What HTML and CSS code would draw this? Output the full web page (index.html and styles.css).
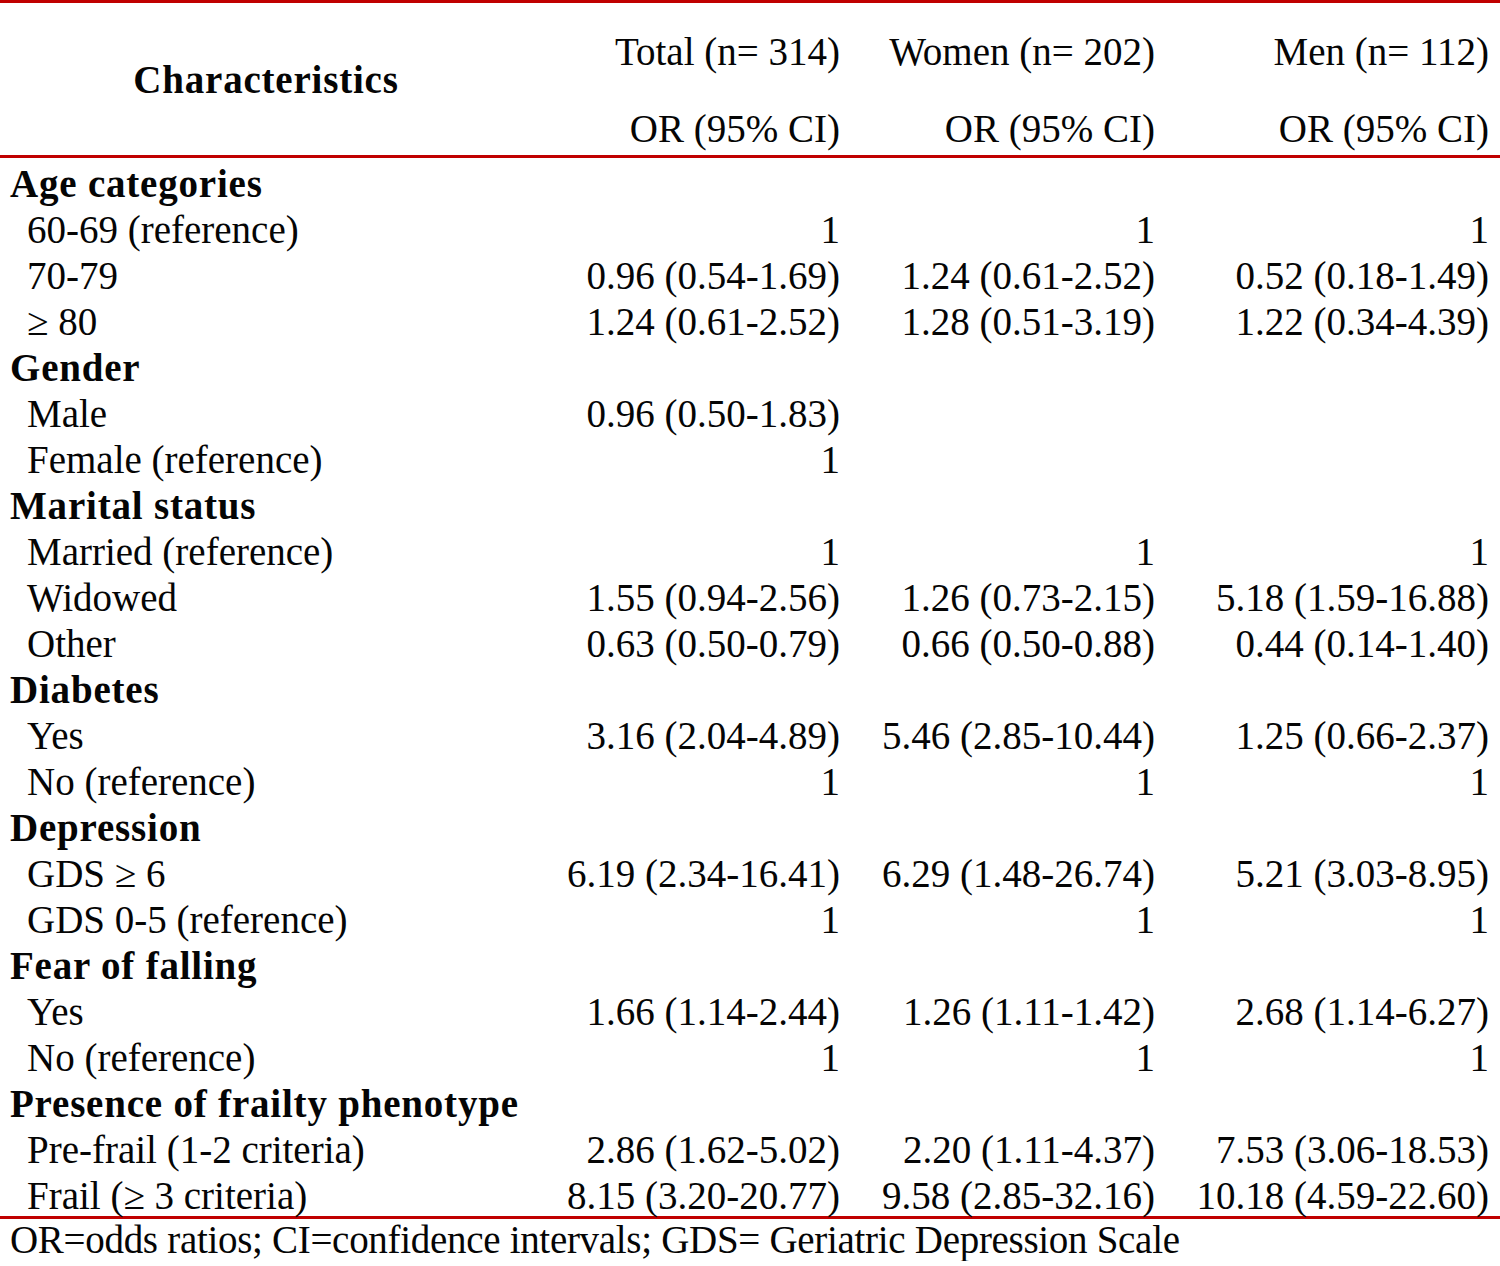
FILE: index.html
```html
<!DOCTYPE html>
<html lang="en">
<head>
<meta charset="utf-8">
<title>Odds ratios table</title>
<link rel="stylesheet" href="styles.css">
</head>
<body>
<div class="sheet">
  <div class="head">
    <div class="h-char">Characteristics</div>
    <div class="h-n h-c2">Total (n= 314)</div>
    <div class="h-n h-c3">Women (n= 202)</div>
    <div class="h-n h-c4">Men (n= 112)</div>
    <div class="h-or h-c2">OR (95% CI)</div>
    <div class="h-or h-c3">OR (95% CI)</div>
    <div class="h-or h-c4">OR (95% CI)</div>
  </div>
  <div class="body">
    <div class="row group"><div class="lab">Age categories</div><div></div><div></div><div></div></div>
    <div class="row"><div class="lab sub">60-69 (reference)</div><div class="num">1</div><div class="num">1</div><div class="num">1</div></div>
    <div class="row"><div class="lab sub">70-79</div><div class="num">0.96 (0.54-1.69)</div><div class="num">1.24 (0.61-2.52)</div><div class="num">0.52 (0.18-1.49)</div></div>
    <div class="row"><div class="lab sub">≥ 80</div><div class="num">1.24 (0.61-2.52)</div><div class="num">1.28 (0.51-3.19)</div><div class="num">1.22 (0.34-4.39)</div></div>
    <div class="row group"><div class="lab">Gender</div><div></div><div></div><div></div></div>
    <div class="row"><div class="lab sub">Male</div><div class="num">0.96 (0.50-1.83)</div><div></div><div></div></div>
    <div class="row"><div class="lab sub">Female (reference)</div><div class="num">1</div><div></div><div></div></div>
    <div class="row group"><div class="lab">Marital status</div><div></div><div></div><div></div></div>
    <div class="row"><div class="lab sub">Married (reference)</div><div class="num">1</div><div class="num">1</div><div class="num">1</div></div>
    <div class="row"><div class="lab sub">Widowed</div><div class="num">1.55 (0.94-2.56)</div><div class="num">1.26 (0.73-2.15)</div><div class="num">5.18 (1.59-16.88)</div></div>
    <div class="row"><div class="lab sub">Other</div><div class="num">0.63 (0.50-0.79)</div><div class="num">0.66 (0.50-0.88)</div><div class="num">0.44 (0.14-1.40)</div></div>
    <div class="row group"><div class="lab">Diabetes</div><div></div><div></div><div></div></div>
    <div class="row"><div class="lab sub">Yes</div><div class="num">3.16 (2.04-4.89)</div><div class="num">5.46 (2.85-10.44)</div><div class="num">1.25 (0.66-2.37)</div></div>
    <div class="row"><div class="lab sub">No (reference)</div><div class="num">1</div><div class="num">1</div><div class="num">1</div></div>
    <div class="row group"><div class="lab">Depression</div><div></div><div></div><div></div></div>
    <div class="row"><div class="lab sub">GDS ≥ 6</div><div class="num">6.19 (2.34-16.41)</div><div class="num">6.29 (1.48-26.74)</div><div class="num">5.21 (3.03-8.95)</div></div>
    <div class="row"><div class="lab sub">GDS 0-5 (reference)</div><div class="num">1</div><div class="num">1</div><div class="num">1</div></div>
    <div class="row group"><div class="lab">Fear of falling</div><div></div><div></div><div></div></div>
    <div class="row"><div class="lab sub">Yes</div><div class="num">1.66 (1.14-2.44)</div><div class="num">1.26 (1.11-1.42)</div><div class="num">2.68 (1.14-6.27)</div></div>
    <div class="row"><div class="lab sub">No (reference)</div><div class="num">1</div><div class="num">1</div><div class="num">1</div></div>
    <div class="row group"><div class="lab">Presence of frailty phenotype</div><div></div><div></div><div></div></div>
    <div class="row"><div class="lab sub">Pre-frail (1-2 criteria)</div><div class="num">2.86 (1.62-5.02)</div><div class="num">2.20 (1.11-4.37)</div><div class="num">7.53 (3.06-18.53)</div></div>
    <div class="row"><div class="lab sub">Frail (≥ 3 criteria)</div><div class="num">8.15 (3.20-20.77)</div><div class="num">9.58 (2.85-32.16)</div><div class="num">10.18 (4.59-22.60)</div></div>
  </div>
  <div class="foot">OR=odds ratios; CI=confidence intervals; GDS= Geriatric Depression Scale</div>
</div>
</body>
</html>
```

FILE: styles.css
```css
html, body {
  margin: 0;
  padding: 0;
  background: #ffffff;
}

.sheet {
  width: 1500px;
  font-family: "Liberation Serif", "Times New Roman", serif;
  font-size: 39px;
  line-height: 46px;
  color: #050505;
}

.head {
  border-top: 3px solid #c00000;
  border-bottom: 3px solid #c00000;
  display: grid;
  grid-template-columns: 512px 318px 315px 334px;
  grid-template-rows: 46px 46px;
  row-gap: 31px;
  padding: 26px 11px 3px 10px;
}

.h-char {
  grid-column: 1;
  grid-row: 1 / span 2;
  align-self: start;
  margin-top: 28px;
  text-align: center;
  font-weight: bold;
  letter-spacing: 0.8px;
}

.h-n { grid-row: 1; text-align: right; }
.h-or { grid-row: 2; text-align: right; }
.h-c2 { grid-column: 2; }
.h-c3 { grid-column: 3; }
.h-c4 { grid-column: 4; }

.body {
  padding: 0 11px 0 10px;
}

.row {
  display: grid;
  grid-template-columns: 512px 318px 315px 334px;
  box-sizing: border-box;
  height: 46px;
  padding-top: 5px;
  line-height: 41px;
  white-space: nowrap;
}

.group .lab {
  font-weight: bold;
  letter-spacing: 0.8px;
}

.lab.sub {
  padding-left: 17px;
}

.num {
  text-align: right;
}

.foot {
  border-top: 3px solid #c00000;
  padding-left: 10px;
  line-height: 42px;
  letter-spacing: -0.3px;
  white-space: nowrap;
}
```
